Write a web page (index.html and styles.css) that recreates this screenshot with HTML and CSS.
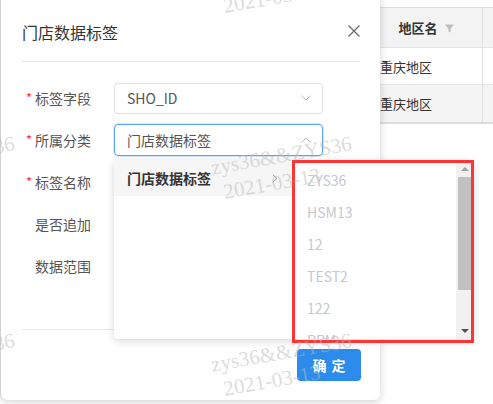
FILE: index.html
```html
<!DOCTYPE html>
<html lang="zh-CN">
<head>
<meta charset="utf-8">
<title>门店数据标签</title>
<link rel="stylesheet" href="styles.css">
</head>
<body>
<div class="page">
  <div class="table">
    <div class="cell head"></div>
    <div class="cell head center">地区名<svg class="filter" viewBox="0 0 10 10" width="9" height="9"><path d="M0 0.5h10L6.2 5v4.5L3.8 8.2V5z" fill="#bdbdbd"/></svg></div>
    <div class="cell head last"></div>
    <div class="cell"></div>
    <div class="cell">重庆地区</div>
    <div class="cell last"></div>
    <div class="cell alt"></div>
    <div class="cell alt">重庆地区</div>
    <div class="cell alt last"></div>
  </div>
</div>

<div class="modal">
  <div class="modal-head">
    <span class="title">门店数据标签</span>
    <svg class="close" viewBox="0 0 12 12" width="12" height="12"><path d="M0.5 0.5L11.5 11.5M11.5 0.5L0.5 11.5" stroke="#666" stroke-width="1.2" fill="none"/></svg>
  </div>
  <div class="modal-body">
    <div class="row">
      <label class="label req">标签字段</label>
      <div class="select"><span>SHO_ID</span><svg viewBox="0 0 10 6" width="10" height="6"><path d="M0.5 0.5L5 5L9.5 0.5" stroke="#b8bcc4" fill="none"/></svg></div>
    </div>
    <div class="row">
      <label class="label req">所属分类</label>
      <div class="select focus"><span>门店数据标签</span><svg viewBox="0 0 10 6" width="10" height="6"><path d="M0.5 5.5L5 1L9.5 5.5" stroke="#b8bcc4" fill="none"/></svg></div>
    </div>
    <div class="row">
      <label class="label req">标签名称</label>
      <div class="select"><span></span></div>
    </div>
    <div class="row">
      <label class="label">是否追加</label>
      <div></div>
    </div>
    <div class="row">
      <label class="label">数据范围</label>
      <div></div>
    </div>
  </div>
  <div class="modal-foot">
    <button class="btn">确 定</button>
  </div>
</div>

<div class="cascader">
  <div class="col first">
    <div class="opt active"><span>门店数据标签</span><svg viewBox="0 0 6 9" width="6" height="9"><path d="M0.8 0.8L5 4.5L0.8 8.2" stroke="#999" fill="none"/></svg></div>
  </div>
  <div class="col second">
    <div class="list">
      <div class="opt2">ZYS36</div>
      <div class="opt2">HSM13</div>
      <div class="opt2">12</div>
      <div class="opt2">TEST2</div>
      <div class="opt2">122</div>
      <div class="opt2">RRM</div>
    </div>
    <div class="scrollbar">
      <div class="sb-btn"><svg viewBox="0 0 8 4" width="8" height="4"><path d="M0 4L4 0L8 4z" fill="#a3a3a3"/></svg></div>
      <div class="sb-track"><div class="sb-thumb"></div></div>
      <div class="sb-btn"><svg viewBox="0 0 8 4" width="8" height="4"><path d="M0 0L8 0L4 4z" fill="#505050"/></svg></div>
    </div>
  </div>
</div>

<div class="highlight"></div>

<div class="wm wm-top"><div>zys36&amp;&amp;ZYS36</div><div class="l2">2021-03-13</div></div>
<div class="wm wm-mid"><div>zys36&amp;&amp;ZYS36</div><div class="l2">2021-03-13</div></div>
<div class="wm wm-bot"><div>zys36&amp;&amp;ZYS36</div><div class="l2">2021-03-13</div></div>
<div class="wm wm-lmid"><div>zys36&amp;&amp;ZYS36</div><div class="l2">2021-03-13</div></div>
<div class="wm wm-lbot"><div>zys36&amp;&amp;ZYS36</div><div class="l2">2021-03-13</div></div>
</body>
</html>
```

FILE: styles.css
```css
* { box-sizing: border-box; }
html, body {
  margin: 0;
  width: 493px;
  height: 404px;
  overflow: hidden;
  background: #fff;
  font-family: "Noto Sans CJK SC", "Noto Sans", sans-serif;
  position: relative;
}

/* background page table */
.page { padding-top: 7px; }
.table {
  display: grid;
  grid-template-columns: 374px 109px 1fr;
  grid-template-rows: 40px 37px 37px;
  border-top: 1px solid #dedede;
  border-bottom: 2px solid #dcdcdc;
}
.cell {
  font-size: 13px;
  color: #333;
  display: flex;
  align-items: center;
  padding-left: 6px;
  border-bottom: 1px solid #e4e4e4;
  border-right: 1px solid #e0e0e0;
}
.cell.last { border-right: none; }
.cell.head { background: #f3f3f3; font-weight: bold; }
.cell.alt { background: #f4f4f4; border-bottom: none; }
.cell.center { justify-content: center; padding-left: 0; padding-right: 4px; }
.filter { margin-left: 7px; margin-top: 1px; }

/* modal */
.modal {
  position: absolute;
  left: 1px;
  top: -10px;
  width: 379px;
  background: #fff;
  border-radius: 6px;
  padding: 0 20px;
  box-shadow: 0 2px 8px rgba(0,0,0,0.18), -1px 0 0 #e4e4e4;
}
.modal-head {
  display: flex;
  justify-content: space-between;
  align-items: center;
  padding: 31px 0 18px 1px;
  border-bottom: 1px solid #e8e8e8;
}
.title { font-size: 16px; line-height: 22px; color: #333; }
.close { margin-top: -3px; }
.modal-body {
  padding: 20px 0 47px;
  display: flex;
  flex-direction: column;
  gap: 10px;
}
.row {
  display: grid;
  grid-template-columns: 93px 209px;
  height: 32px;
  align-items: center;
}
.label {
  font-size: 14px;
  color: #555;
  padding-left: 14px;
  line-height: 20px;
}
.label.req { padding-left: 5px; }
.label.req::before {
  content: "*";
  color: #f33;
  font-size: 13px;
  display: inline-block;
  width: 9px;
  position: relative;
  top: -1px;
}
.select {
  height: 31px;
  border: 1px solid #dcdfe6;
  border-radius: 4px;
  display: flex;
  align-items: center;
  justify-content: space-between;
  padding: 0 11px 0 12px;
  font-size: 14px;
  color: #555;
}
.select.focus {
  height: 32px;
  border-color: #58a6f5;
  box-shadow: 0 0 0 1px rgba(88,166,245,0.25);
}
.modal-foot {
  border-top: 1px solid #e8e8e8;
  padding: 19px 0;
  display: flex;
  justify-content: flex-end;
}
.btn {
  width: 64px;
  height: 32px;
  margin-right: -1px;
  border: none;
  border-radius: 4px;
  background: #2d8beb;
  color: #fff;
  font-family: inherit;
  font-size: 14px;
  font-weight: bold;
  word-spacing: 2px;
  padding: 0;
}

/* cascader dropdown */
.cascader {
  position: absolute;
  left: 114px;
  top: 160px;
  width: 359px;
  height: 179px;
  background: #fff;
  border-radius: 4px;
  box-shadow: 0 2px 8px rgba(0,0,0,0.16);
  display: flex;
  overflow: hidden;
}
.col.first { width: 179px; }
.opt {
  height: 36px;
  background: #f6f6f6;
  display: flex;
  align-items: center;
  justify-content: space-between;
  padding: 0 15px 0 13px;
  font-size: 14px;
  font-weight: bold;
  color: #333;
}
.col.second { width: 180px; display: flex; }
.list { flex: 1; padding-top: 4px; overflow: hidden; }
.opt2 {
  height: 32px;
  line-height: 32px;
  padding-left: 14px;
  font-size: 14px;
  color: #c5c8ce;
}
.scrollbar {
  width: 17px;
  background: #f1f1f1;
  display: flex;
  flex-direction: column;
}
.sb-btn {
  height: 17px;
  display: flex;
  align-items: center;
  justify-content: center;
}
.sb-track { flex: 1; }
.sb-thumb {
  margin: 0 2px;
  height: 113px;
  background: #c1c1c1;
}

/* annotation box */
.highlight {
  position: absolute;
  left: 292px;
  top: 160px;
  width: 182px;
  height: 183px;
  border: 3px solid #ff3535;
}

/* watermark */
.wm {
  position: absolute;
  font-family: "Liberation Serif", serif;
  font-size: 21px;
  line-height: 26px;
  color: rgba(185,185,185,0.5);
  transform: rotate(-10deg);
  transform-origin: 0 0;
  white-space: nowrap;
  pointer-events: none;
}
.wm .l2 { padding-left: 8px; }
.wm-top { left: 209px; top: -31px; }
.wm-mid { left: 209px; top: 155px; }
.wm-bot { left: 209px; top: 352px; }
.wm-lmid { left: -128px; top: 155px; }
.wm-lbot { left: -128px; top: 352px; }
```
